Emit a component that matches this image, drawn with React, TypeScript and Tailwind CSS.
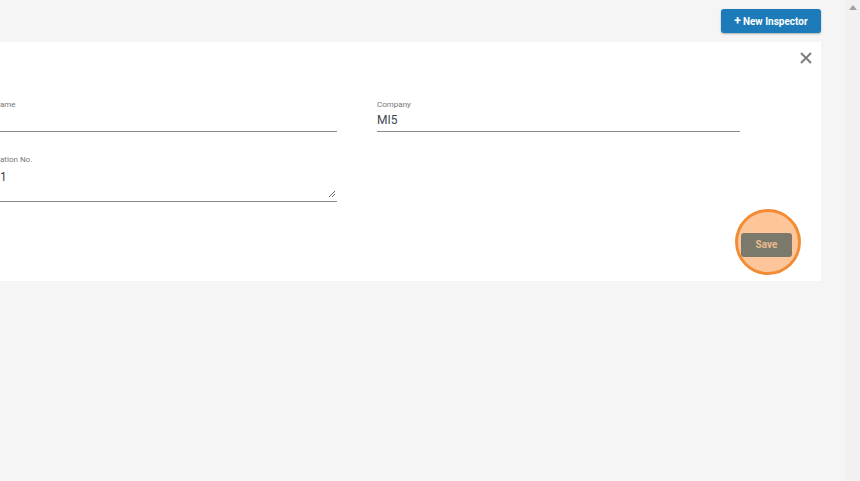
import React from "react";

function Field({ label, value, width, textarea }: { label: string; value: string; width: string; textarea?: boolean }) {
  return (
    <div className={`${width} flex flex-col`}>
      <span className="text-[8px] leading-[10px] text-[#777]">{label}</span>
      <div
        className={`relative border-b border-[#8a8a8a] text-[12px] text-[#3c4650] ${
          textarea ? "h-[37px] pt-[5px]" : "h-[22px] pt-[3px]"
        } leading-[14px]`}
      >
        {value}
        {textarea && (
          <svg className="absolute right-[1px] bottom-[3px] w-[8px] h-[8px]" viewBox="0 0 8 8">
            <path d="M7 1L1 7M7 4L4 7" stroke="#555" strokeWidth={0.9} />
          </svg>
        )}
      </div>
    </div>
  );
}

export default function App() {
  return (
    <div className="w-[860px] h-[481px] bg-[#f5f5f5] flex overflow-hidden" style={{ fontFamily: "Roboto, 'Open Sans', sans-serif" }}>
      <div className="w-[845px] flex flex-col">
        {/* top bar */}
        <div className="h-[42px] flex items-start justify-end pr-[24px] pt-[9px]">
          <button className="h-[24px] w-[100px] rounded-[3px] bg-[#1c7bb8] text-white text-[10px] font-bold shadow-[0_1px_2px_rgba(0,0,0,0.3)] flex items-center justify-center gap-[2px]">
            <span className="text-[12px] leading-none">+</span> New Inspector
          </button>
        </div>

        {/* card */}
        <div className="w-[821px] h-[239px] bg-white flex flex-col">
          <div className="flex justify-end pr-[9px] pt-[10px] h-[58px]">
            <svg className="w-[12px] h-[12px]" viewBox="0 0 12 12">
              <path d="M1 1L11 11M11 1L1 11" stroke="#7a7a7a" strokeWidth={1.8} />
            </svg>
          </div>
          <div className="flex gap-[40px]">
            <Field label="ame" value="" width="w-[337px]" />
            <Field label="Company" value="MI5" width="w-[363px]" />
          </div>
          <div className="flex mt-[23px]">
            <Field label="ation No." value="1" width="w-[337px]" textarea />
          </div>
          <div className="flex justify-end pr-[29px] mt-[29px]">
            <div className="relative">
              <div className="absolute left-[-6px] top-[-22px] w-[66px] h-[66px] rounded-full border-[3px] border-[#f28c34] bg-[#fcc59a]" />
              <button className="relative h-[24px] w-[51px] rounded-[3px] bg-[#7b796b] text-[#e9bc8e] text-[10px] font-bold">Save</button>
            </div>
          </div>
        </div>
      </div>

      {/* scrollbar */}
      <div className="w-[15px] h-full bg-[#f1f1f1] flex justify-center pt-[5px]">
        <svg className="w-[8px] h-[5px]" viewBox="0 0 8 5">
          <path d="M4 0L8 5H0Z" fill="#a3a3a3" />
        </svg>
      </div>
    </div>
  );
}
